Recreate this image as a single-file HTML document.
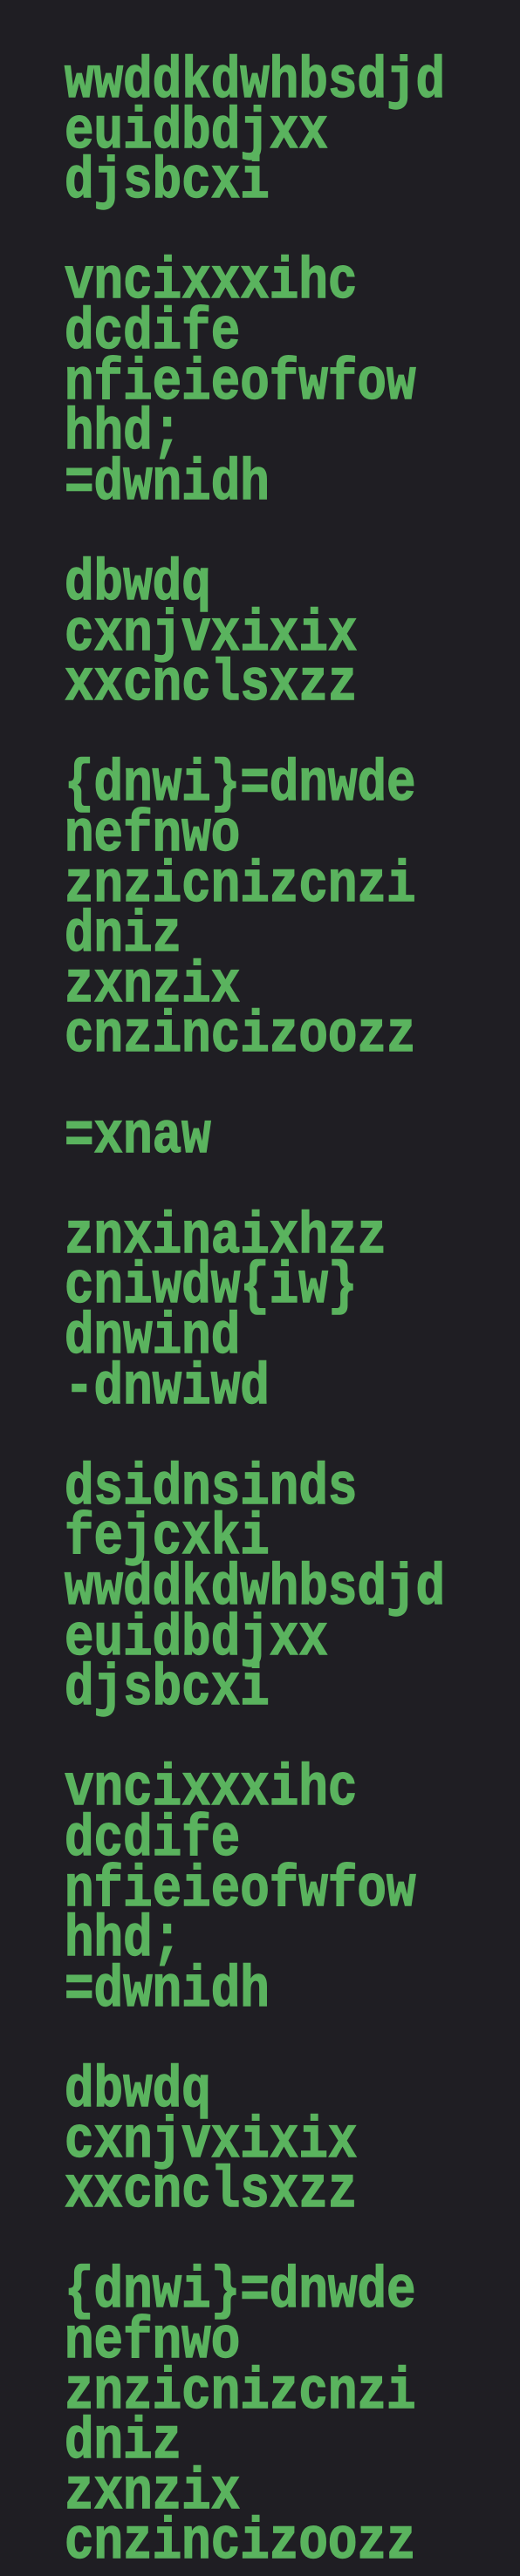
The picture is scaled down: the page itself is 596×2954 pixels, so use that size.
<!DOCTYPE html>
<html><head><meta charset="utf-8"><style>
html,body{margin:0;padding:0;background:#1f1e23;}
body{width:596px;height:2915px;overflow:hidden;position:relative;}
.t div{position:absolute;left:74px;white-space:pre;height:57.6px;font-family:"Liberation Mono",monospace;font-weight:bold;font-size:55.9px;line-height:57.6px;color:#5ab35e;-webkit-text-stroke:1.2px #5ab35e;transform:scaleY(1.2);transform-origin:0 44px;}
</style></head><body><div class="t">
<div style="top:68px">wwddkdwhbsdjd</div>
<div style="top:125.6px">euidbdjxx</div>
<div style="top:183.2px">djsbcxi</div>
<div style="top:298.4px">vncixxxihc</div>
<div style="top:356px">dcdife</div>
<div style="top:413.6px">nfieieofwfow</div>
<div style="top:471.2px">hhd;</div>
<div style="top:528.8px">=dwnidh</div>
<div style="top:644px">dbwdq</div>
<div style="top:701.6px">cxnjvxixix</div>
<div style="top:759.2px">xxcnclsxzz</div>
<div style="top:874.4px">{dnwi}=dnwde</div>
<div style="top:932px">nefnwo</div>
<div style="top:989.6px">znzicnizcnzi</div>
<div style="top:1047.2px">dniz</div>
<div style="top:1104.8px">zxnzix</div>
<div style="top:1162.4px">cnzincizoozz</div>
<div style="top:1277.6px">=xnaw</div>
<div style="top:1392.8px">znxinaixhzz</div>
<div style="top:1450.4px">cniwdw{iw}</div>
<div style="top:1508px">dnwind</div>
<div style="top:1565.6px">-dnwiwd</div>
<div style="top:1680.8px">dsidnsinds</div>
<div style="top:1738.4px">fejcxki</div>
<div style="top:1796px">wwddkdwhbsdjd</div>
<div style="top:1853.6px">euidbdjxx</div>
<div style="top:1911.2px">djsbcxi</div>
<div style="top:2026.4px">vncixxxihc</div>
<div style="top:2084px">dcdife</div>
<div style="top:2141.6px">nfieieofwfow</div>
<div style="top:2199.2px">hhd;</div>
<div style="top:2256.8px">=dwnidh</div>
<div style="top:2372px">dbwdq</div>
<div style="top:2429.6px">cxnjvxixix</div>
<div style="top:2487.2px">xxcnclsxzz</div>
<div style="top:2602.4px">{dnwi}=dnwde</div>
<div style="top:2660px">nefnwo</div>
<div style="top:2717.6px">znzicnizcnzi</div>
<div style="top:2775.2px">dniz</div>
<div style="top:2832.8px">zxnzix</div>
<div style="top:2890.4px">cnzincizoozz</div>
</div></body></html>
